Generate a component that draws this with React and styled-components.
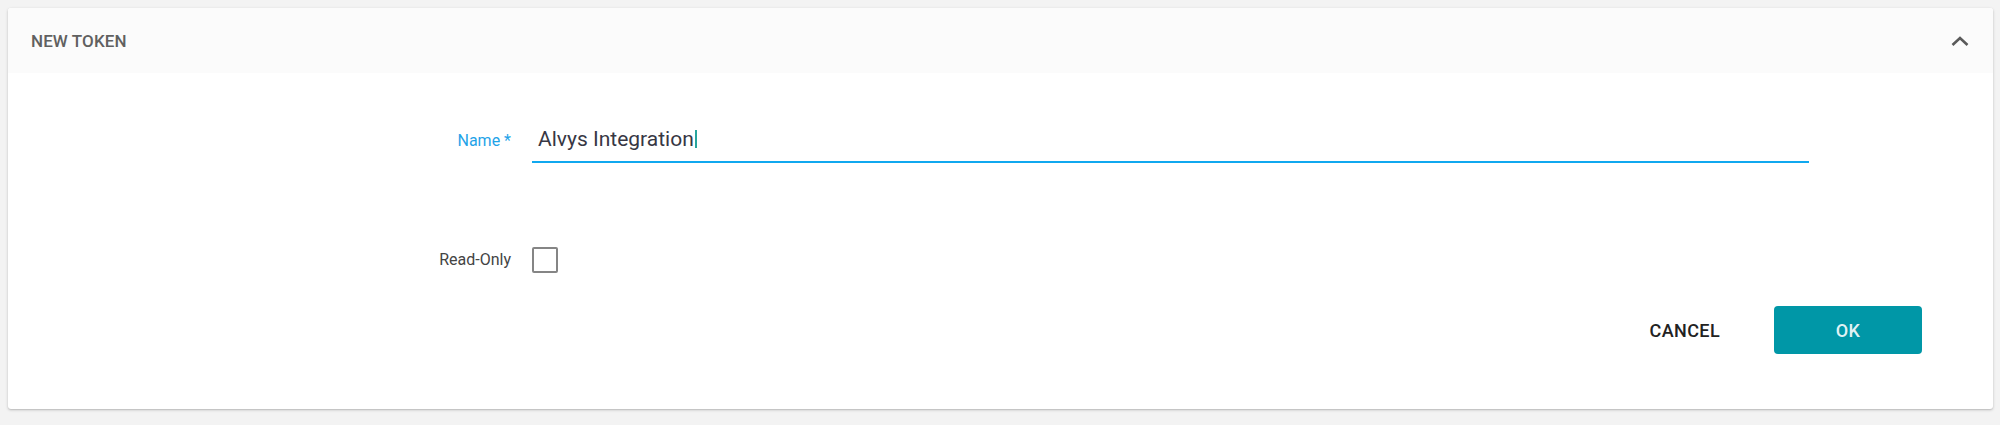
import styled, { createGlobalStyle } from 'styled-components';

const GlobalStyle = createGlobalStyle`
  html, body {
    margin: 0;
    padding: 0;
    background: #f3f3f3;
    font-family: Roboto, "Liberation Sans", Arial, sans-serif;
  }
`;

const Page = styled.div`
  padding: 8px 7px 8px 8px;
`;

const Card = styled.section`
  background: #ffffff;
  border-radius: 3px;
  box-shadow: 0 1px 3px rgba(0, 0, 0, 0.22), 0 1px 1px rgba(0, 0, 0, 0.06);
  overflow: hidden;
`;

const Header = styled.header`
  height: 65px;
  display: flex;
  align-items: center;
  justify-content: space-between;
  padding: 0 23px;
  background: #fbfbfb;
`;

const Title = styled.h2`
  margin: 0;
  font-size: 17px;
  font-weight: 500;
  color: #606060;
  letter-spacing: 0.1px;
`;

const Toggle = styled.button`
  border: 0;
  padding: 0;
  background: none;
  display: flex;
  cursor: pointer;
`;

const Body = styled.div`
  padding: 48px 0 55px;
`;

const Row = styled.div`
  display: grid;
  grid-template-columns: 503px 1fr;
  column-gap: 21px;
  align-items: ${p => p.$align || 'end'};
  padding-right: 184px;
  margin-top: ${p => p.$top || 0}px;
`;

const Label = styled.label`
  text-align: right;
  font-size: 16px;
  line-height: 20px;
  color: ${p => (p.$active ? '#1fa3e8' : '#444444')};
  padding-bottom: ${p => p.$pb || 0}px;
`;

const Field = styled.div`
  padding: 4px 6px 8px;
  border-bottom: 2px solid #10a8ef;
  font-size: 21px;
  line-height: 28px;
  color: #373744;
  display: flex;
  align-items: center;
`;

const Caret = styled.span`
  display: inline-block;
  width: 2px;
  height: 18px;
  margin-left: 1px;
  background: #27a59d;
`;

const Checkbox = styled.span`
  width: 26px;
  height: 26px;
  box-sizing: border-box;
  border: 2px solid #858585;
  border-radius: 2px;
`;

const Actions = styled.div`
  display: flex;
  justify-content: flex-end;
  align-items: center;
  margin-top: 33px;
  padding-right: 71px;
`;

const Button = styled.button`
  border: 0;
  border-radius: 4px;
  height: 48px;
  font-family: inherit;
  font-size: 18px;
  font-weight: 500;
  letter-spacing: 0.4px;
  cursor: pointer;
  background: ${p => (p.$primary ? '#0097a7' : 'transparent')};
  color: ${p => (p.$primary ? 'rgba(255,255,255,0.9)' : '#222222')};
  width: ${p => (p.$primary ? '148px' : 'auto')};
  padding: 0 16px;
  margin-right: ${p => (p.$primary ? 0 : 38)}px;
`;

export default function App() {
  return (
    <>
      <GlobalStyle />
      <Page>
        <Card>
          <Header>
            <Title>NEW TOKEN</Title>
            <Toggle aria-label="Collapse">
              <svg width="20" height="12" viewBox="0 0 20 12">
                <path d="M2.5 10 L10 3 L17.5 10" fill="none" stroke="#5a5a5a" strokeWidth="2.6" />
              </svg>
            </Toggle>
          </Header>
          <Body>
            <Row>
              <Label $active $pb={12}>Name *</Label>
              <Field>
                Alvys Integration
                <Caret />
              </Field>
            </Row>
            <Row $align="center" $top={84}>
              <Label>Read-Only</Label>
              <Checkbox />
            </Row>
            <Actions>
              <Button>CANCEL</Button>
              <Button $primary>OK</Button>
            </Actions>
          </Body>
        </Card>
      </Page>
    </>
  );
}
